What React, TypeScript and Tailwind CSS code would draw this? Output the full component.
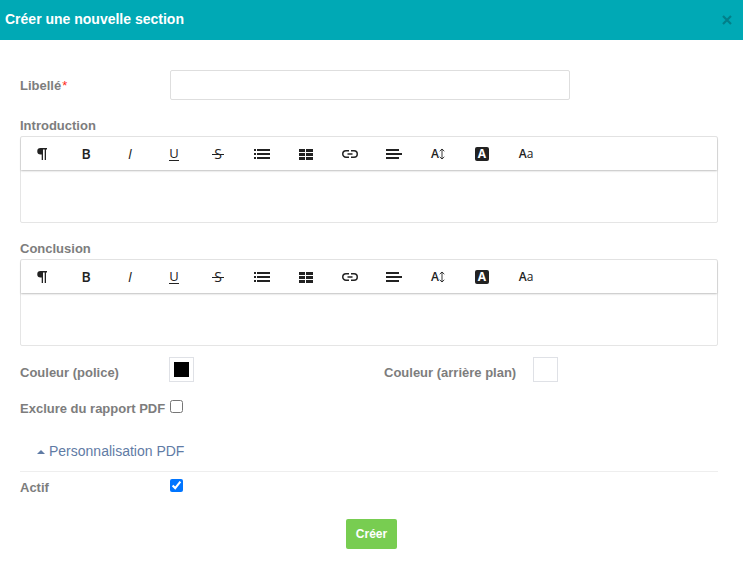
import { useState } from "react";
import type { ReactNode } from "react";

const svg = "h-6 w-6 fill-current";

const tools: { name: string; icon: ReactNode }[] = [
  {
    name: "Format de paragraphe",
    icon: (
      <svg viewBox="0 0 24 24" className={svg}>
        <path d="M10.5 6H17v1.500h-1V18h-1.300V7.500h-1.700V18h-1.300v-5.500h-1.200a3.250 3.250 0 0 1 0-6.500z" />
      </svg>
    ),
  },
  {
    name: "Gras",
    icon: <span className="font-['Open_Sans',sans-serif] text-sm font-semibold">B</span>,
  },
  {
    name: "Italique",
    icon: <span className="font-['Open_Sans',sans-serif] text-sm italic">I</span>,
  },
  {
    name: "Souligné",
    icon: (
      <span className="border-b border-current font-['Open_Sans',sans-serif] text-[13px] leading-[13px]">
        U
      </span>
    ),
  },
  {
    name: "Barré",
    icon: (
      <svg viewBox="0 0 24 24" className={svg}>
        <text x="12" y="17" textAnchor="middle" fontSize="14" fontFamily="Open Sans, sans-serif">
          S
        </text>
        <path d="M6 12h12v1H6z" />
      </svg>
    ),
  },
  {
    name: "Liste",
    icon: (
      <svg viewBox="0 0 24 24" className={svg}>
        <path d="M4 7h2v2H4zM4 11h2v2H4zM4 15h2v2H4zM7 7h13v2H7zM7 11h13v2H7zM7 15h13v2H7z" />
      </svg>
    ),
  },
  {
    name: "Tableau",
    icon: (
      <svg viewBox="0 0 24 24" className={svg}>
        <path d="M5 7h6v3H5zM12 7h7v3h-7zM5 11h6v3H5zM12 11h7v3h-7zM5 15h6v3H5zM12 15h7v3h-7z" />
      </svg>
    ),
  },
  {
    name: "Lien",
    icon: (
      <svg viewBox="0 0 24 24" className="h-6 w-6 fill-none stroke-current" strokeWidth="1.5">
        <path d="M11 15.250H8a3.250 3.250 0 0 1 0-6.500h3M13 8.750h3a3.250 3.250 0 0 1 0 6.500h-3M9.500 12h5" />
      </svg>
    ),
  },
  {
    name: "Alignement",
    icon: (
      <svg viewBox="0 0 24 24" className={svg}>
        <path d="M4 7h13v2H4zM4 11h16v2H4zM4 15h13v2H4z" />
      </svg>
    ),
  },
  {
    name: "Taille de police",
    icon: (
      <span className="flex items-center font-['Open_Sans',sans-serif] text-xs font-semibold">
        A
        <svg viewBox="0 0 6 12" className="h-3 w-1.5 fill-none stroke-current" strokeWidth="0.9">
          <path d="M3 1v10M0.700 3.200 3 1l2.300 2.200M0.700 8.800 3 11l2.300-2.200" />
        </svg>
      </span>
    ),
  },
  {
    name: "Couleur de fond",
    icon: (
      <span className="flex h-3.5 w-3.5 items-center justify-center rounded-xs bg-[#222] font-['Open_Sans',sans-serif] text-xs font-bold text-white">
        A
      </span>
    ),
  },
  {
    name: "Police",
    icon: (
      <span className="font-['Open_Sans',sans-serif] text-xs">
        <span className="font-semibold">A</span>a
      </span>
    ),
  },
];

function Editor({ id, label }: { id: string; label: string }) {
  return (
    <div>
      <label htmlFor={id} className="block h-[18px] leading-4 font-bold">
        {label}
      </label>
      <div className="rounded-xs border border-[#e5e5e5]">
        <div
          role="toolbar"
          aria-label={label}
          className="flex h-[33px] items-center rounded-t-xs shadow-[0_1px_2px_rgba(0,0,0,0.25)]"
        >
          {tools.map((tool) => (
            <button
              key={tool.name}
              type="button"
              aria-label={tool.name}
              className="flex h-[34px] w-11 items-center justify-center pr-0.5 text-[#222]"
            >
              {tool.icon}
            </button>
          ))}
        </div>
        <textarea id={id} className="block h-[52px] w-full resize-none px-5 py-3 outline-none" />
      </div>
    </div>
  );
}

function Swatch({ id, label, color }: { id: string; label: string; color: string }) {
  return (
    <div className="flex">
      <label htmlFor={id} className="w-[149px] pt-2 leading-4 font-bold whitespace-nowrap">
        {label}
      </label>
      <button id={id} type="button" className="h-[25px] w-[25px] border border-[#dfe1e6] p-1">
        <span className="block h-[15px] w-[15px]" style={{ backgroundColor: color }} />
      </button>
    </div>
  );
}

export default function App() {
  const [active, setActive] = useState(true);
  const [excluded, setExcluded] = useState(false);

  return (
    <div className="bg-white font-['Liberation_Sans',Arial,sans-serif] text-[13px] text-[#7d7d7d]">
      <header className="flex h-10 items-center justify-between bg-[#00a9b5] pr-[11px] pl-[5px]">
        <h1 className="pb-0.5 text-sm font-bold text-white">Créer une nouvelle section</h1>
        <button type="button" aria-label="Fermer" className="text-[#027f89]">
          <svg viewBox="0 0 10 10" className="h-2.5 w-2.5 fill-none stroke-current" strokeWidth="2.2">
            <path d="m1 1 8 8M9 1 1 9" />
          </svg>
        </button>
      </header>

      <form className="pt-[30px] pr-[25px] pb-4 pl-5" onSubmit={(e) => e.preventDefault()}>
        <div className="flex items-center">
          <label htmlFor="libelle" className="w-[150px] pt-0.5 font-bold">
            Libellé<span className="ml-px font-normal text-[#ff2a1a]">*</span>
          </label>
          <input
            id="libelle"
            type="text"
            className="h-[30px] w-[400px] rounded-xs border border-[#dedede] px-2 outline-none"
          />
        </div>

        <div className="mt-[18px] space-y-[18px]">
          <Editor id="introduction" label="Introduction" />
          <Editor id="conclusion" label="Conclusion" />
        </div>

        <div className="mt-[11px] grid grid-cols-2 gap-x-[30px]">
          <Swatch id="police" label="Couleur (police)" color="#000" />
          <Swatch id="fond" label="Couleur (arrière plan)" color="#fff" />
        </div>

        <div className="mt-[18px] flex">
          <label htmlFor="exclure" className="w-[150px] pt-px leading-4 font-bold whitespace-nowrap">
            Exclure du rapport PDF
          </label>
          <input
            id="exclure"
            type="checkbox"
            checked={excluded}
            onChange={(e) => setExcluded(e.target.checked)}
            className="h-[13px] w-[13px]"
          />
        </div>

        <div className="mt-6 border-b border-[#eee] pb-2.5 pl-[17px]">
          <a href="#personnalisation" className="flex items-center text-sm text-[#5f7ba5]">
            <span className="mt-0.5 mr-1 border-x-4 border-b-4 border-x-transparent border-b-current" />
            Personnalisation PDF
          </a>
        </div>

        <div className="mt-[7px] flex">
          <label htmlFor="actif" className="w-[150px] pt-px leading-4 font-bold">
            Actif
          </label>
          <input
            id="actif"
            type="checkbox"
            checked={active}
            onChange={(e) => setActive(e.target.checked)}
            className="h-[13px] w-[13px]"
          />
        </div>

        <div className="-mr-[5px] mt-[23px] flex justify-center">
          <button
            type="submit"
            className="h-[30px] rounded-xs bg-[#78cd51] px-2.5 text-xs font-bold text-white"
          >
            Créer
          </button>
        </div>
      </form>
    </div>
  );
}
